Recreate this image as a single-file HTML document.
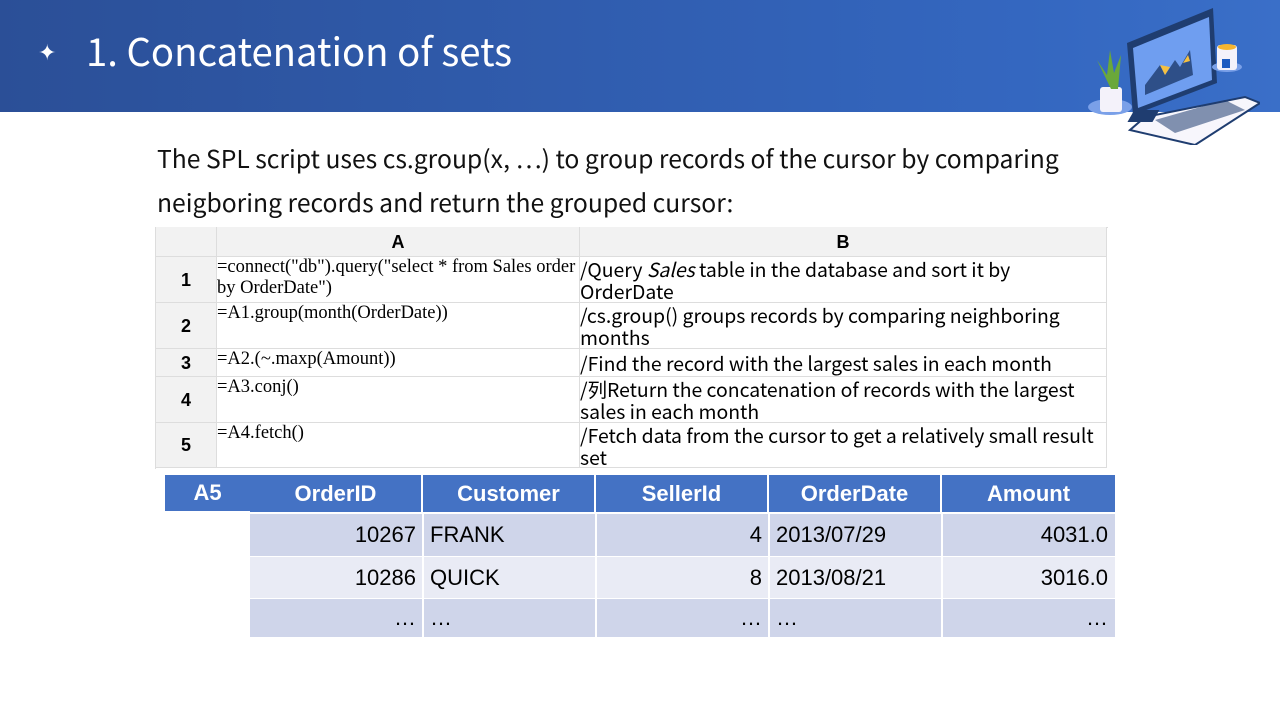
<!DOCTYPE html><html><head><style>
body{margin:0;width:1280px;height:720px;background:#fff;position:relative;overflow:hidden;font-family:"Liberation Sans","Noto Sans CJK SC",sans-serif}
.y{font-family:"Noto Sans CJK SC","Liberation Sans",sans-serif}
.hd{position:absolute;left:0;top:0;width:1280px;height:112px;background:linear-gradient(90deg,#2b4f97,#3467c0 80%,#3a6fc8)}
.t{position:absolute;left:86px;top:26px;color:#fff;font-size:38.3px;line-height:50px;white-space:nowrap}
.star{position:absolute;left:38px;top:40px;color:#fff;font-size:22px}
.p{position:absolute;left:157px;font-size:24.7px;color:#111;line-height:30px;white-space:nowrap}
.a{position:absolute;border-right:1px solid #ddd;border-bottom:1px solid #ddd;box-sizing:border-box;font-size:18px;line-height:22px;white-space:nowrap}
.code{font-family:"Liberation Serif",serif;font-size:18.5px;line-height:21px}
.b{font-family:"Noto Sans CJK SC","Liberation Sans",sans-serif;font-size:19.4px;line-height:22px;padding-top:1px}
.r{position:absolute;box-sizing:border-box;font-size:22px;line-height:42px;padding:0 7px}
</style></head><body>
<div class="hd"></div><div class="star">✦</div><div class="t y">1. Concatenation of sets</div>
<svg style="position:absolute;left:1085px;top:5px" width="175" height="140" viewBox="0 0 175 140">
<ellipse cx="25" cy="102" rx="22" ry="8" fill="#7aa0e8"/>
<rect x="15" y="82" width="22" height="25" rx="3" fill="#f4f2fa"/>
<path d="M26 84 L12 55 L22 70 L25 45 L29 68 L36 50 L33 84Z" fill="#6aa83a"/>
<path d="M45 125 L110 140 L175 98 L160 92 L60 112Z" fill="#f7f6fc" stroke="#1f3d70" stroke-width="2"/>
<path d="M48 110 L42 38 L128 3 L132 78Z" fill="#1f3d70"/>
<path d="M53 103 L48 43 L124 12 L127 75Z" fill="#6f9ef0"/>
<path d="M60 80 L75 60 L80 70 L90 55 L95 62 L105 45 L108 70 L60 90Z" fill="#2e4f88"/>
<path d="M75 60 L80 70 L85 62Z M98 58 L103 50 L105 56Z" fill="#f5c040"/>
<path d="M70 115 L140 95 L160 105 L90 128Z" fill="#1f3d70" opacity=".55"/>
<rect x="110" y="105" width="25" height="12" fill="#1f3d70" transform="skewX(-30)"/>
<ellipse cx="142" cy="62" rx="15" ry="5" fill="#7aa0e8"/>
<rect x="132" y="40" width="20" height="25" rx="3" fill="#f4f2fa"/>
<ellipse cx="142" cy="42" rx="9" ry="3" fill="#f5b530"/>
<rect x="137" y="54" width="8" height="9" fill="#1f5cc0"/>
</svg>
<div class="p y" style="top:143px">The SPL script uses cs.group(x, …) to group records of the cursor by comparing</div>
<div class="p y" style="top:187px">neigboring records and return the grouped cursor:</div>
<div style="position:absolute;left:155px;top:227px;width:952px;height:241px;border-left:1px solid #ddd;border-top:1px solid #ddd"></div>
<div class="a" style="left:156px;top:227px;width:61px;height:30px;background:#f2f2f2"></div>
<div class="a" style="left:217px;top:227px;width:363px;height:30px;background:#f2f2f2;text-align:center;font-weight:bold;line-height:30px">A</div>
<div class="a" style="left:580px;top:227px;width:527px;height:30px;background:#f2f2f2;text-align:center;font-weight:bold;line-height:30px">B</div>
<div class="a" style="left:156px;top:257px;width:61px;height:46px;background:#f2f2f2;text-align:center;font-weight:bold;line-height:46px">1</div>
<div class="a code" style="left:217px;top:257px;width:363px;height:46px;overflow:hidden">=connect("db").query("select * from Sales order<br>by OrderDate")</div>
<div class="a b" style="left:580px;top:257px;width:527px;height:46px">/Query <i>Sales</i> table in the database and sort it by<br>OrderDate</div>
<div class="a" style="left:156px;top:303px;width:61px;height:46px;background:#f2f2f2;text-align:center;font-weight:bold;line-height:46px">2</div>
<div class="a code" style="left:217px;top:303px;width:363px;height:46px">=A1.group(month(OrderDate))</div>
<div class="a b" style="left:580px;top:303px;width:527px;height:46px">/cs.group() groups records by comparing neighboring<br>months</div>
<div class="a" style="left:156px;top:349px;width:61px;height:28px;background:#f2f2f2;text-align:center;font-weight:bold;line-height:28px">3</div>
<div class="a code" style="left:217px;top:349px;width:363px;height:28px">=A2.(~.maxp(Amount))</div>
<div class="a b" style="left:580px;top:349px;width:527px;height:28px;line-height:26px">/Find the record with the largest sales in each month</div>
<div class="a" style="left:156px;top:377px;width:61px;height:46px;background:#f2f2f2;text-align:center;font-weight:bold;line-height:46px">4</div>
<div class="a code" style="left:217px;top:377px;width:363px;height:46px">=A3.conj()</div>
<div class="a b" style="left:580px;top:377px;width:527px;height:46px">/列Return the concatenation of records with the largest<br>sales in each month</div>
<div class="a" style="left:156px;top:423px;width:61px;height:45px;background:#f2f2f2;text-align:center;font-weight:bold;line-height:45px">5</div>
<div class="a code" style="left:217px;top:423px;width:363px;height:45px">=A4.fetch()</div>
<div class="a b" style="left:580px;top:423px;width:527px;height:45px">/Fetch data from the cursor to get a relatively small result<br>set</div>

<div class="r" style="left:165px;top:475px;width:85px;height:36px;background:#4472c4;color:#fff;font-weight:bold;text-align:center;line-height:36px">A5</div>
<div style="position:absolute;left:250px;top:475px;width:865px;height:37px;background:#4472c4"></div>
<div class="r" style="left:250px;top:475px;width:173px;color:#fff;font-weight:bold;text-align:center;line-height:37px;border-right:2px solid #fff">OrderID</div>
<div class="r" style="left:423px;top:475px;width:173px;color:#fff;font-weight:bold;text-align:center;line-height:37px;border-right:2px solid #fff">Customer</div>
<div class="r" style="left:596px;top:475px;width:173px;color:#fff;font-weight:bold;text-align:center;line-height:37px;border-right:2px solid #fff">SellerId</div>
<div class="r" style="left:769px;top:475px;width:173px;color:#fff;font-weight:bold;text-align:center;line-height:37px;border-right:2px solid #fff">OrderDate</div>
<div class="r" style="left:942px;top:475px;width:173px;color:#fff;font-weight:bold;text-align:center;line-height:37px">Amount</div>
<div style="position:absolute;left:250px;top:514px;width:865px;height:42px;background:#cfd5ea"></div>
<div style="position:absolute;left:250px;top:557px;width:865px;height:41px;background:#e9ebf5"></div>
<div style="position:absolute;left:250px;top:599px;width:865px;height:38px;background:#cfd5ea"></div>
<div style="position:absolute;left:422px;top:514px;width:2px;height:123px;background:#fff"></div>
<div style="position:absolute;left:595px;top:514px;width:2px;height:123px;background:#fff"></div>
<div style="position:absolute;left:768px;top:514px;width:2px;height:123px;background:#fff"></div>
<div style="position:absolute;left:941px;top:514px;width:2px;height:123px;background:#fff"></div>
<div class="r" style="left:250px;top:514px;width:173px;text-align:right">10267</div>
<div class="r" style="left:423px;top:514px;width:173px">FRANK</div>
<div class="r" style="left:596px;top:514px;width:173px;text-align:right">4</div>
<div class="r" style="left:769px;top:514px;width:173px">2013/07/29</div>
<div class="r" style="left:942px;top:514px;width:173px;text-align:right">4031.0</div>
<div class="r" style="left:250px;top:557px;width:173px;text-align:right">10286</div>
<div class="r" style="left:423px;top:557px;width:173px">QUICK</div>
<div class="r" style="left:596px;top:557px;width:173px;text-align:right">8</div>
<div class="r" style="left:769px;top:557px;width:173px">2013/08/21</div>
<div class="r" style="left:942px;top:557px;width:173px;text-align:right">3016.0</div>
<div class="r" style="left:250px;top:598px;width:173px;text-align:right;line-height:40px">…</div>
<div class="r" style="left:423px;top:598px;width:173px;line-height:40px">…</div>
<div class="r" style="left:596px;top:598px;width:173px;text-align:right;line-height:40px">…</div>
<div class="r" style="left:769px;top:598px;width:173px;line-height:40px">…</div>
<div class="r" style="left:942px;top:598px;width:173px;text-align:right;line-height:40px">…</div>
</body></html>
